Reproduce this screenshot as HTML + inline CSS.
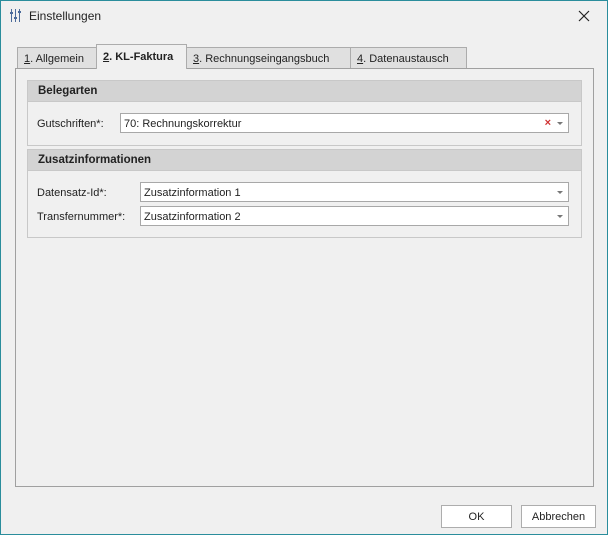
<!DOCTYPE html>
<html><head><meta charset="utf-8"><style>
*{box-sizing:border-box;margin:0;padding:0}
body{width:608px;height:535px;background:#f0f0f0;font-family:"Liberation Sans",sans-serif;font-size:11px;color:#222;position:relative;overflow:hidden}
.win{position:absolute;left:0;top:0;width:608px;height:535px;border:1px solid #2a8d9c}
.a{position:absolute}
.tab{position:absolute;top:47px;height:22px;border:1px solid #acacac;border-bottom:none;background:#e0e0e0;padding:5px 0 0 6px}
.tab.act{top:44px;height:25px;background:#f0f0f0;font-weight:bold;padding:6px 0 0 6px;z-index:2}
.panel{position:absolute;left:15px;top:68px;width:579px;height:419px;border:1px solid #a0a0a0}
.grp{position:absolute;left:27px;width:555px;border:1px solid #c8c8c8}
.gh{height:21px;background:#d3d3d3;font-weight:bold;font-size:11.5px;padding:4px 0 0 10px;border-bottom:1px solid #c8c8c8}
.cb{position:absolute;height:20px;background:#fff;border:1px solid #a8a8a8;padding:4px 0 0 3px}
.arr{position:absolute;right:5px;top:8px;width:0;height:0;border-left:3.5px solid transparent;border-right:3.5px solid transparent;border-top:3.5px solid #777}
.btn{position:absolute;top:505px;height:23px;border:1px solid #adadad;background:#fff;text-align:center;padding-top:5px}
u{text-decoration:underline}
</style></head><body><div class="win"></div>
<svg class="a" style="left:10px;top:9px" width="12" height="13" viewBox="0 0 12 13"><g stroke="#4a6a9a" stroke-width="1"><line x1="1.5" y1="0" x2="1.5" y2="13"/><line x1="5.5" y1="0" x2="5.5" y2="13"/><line x1="9.5" y1="0" x2="9.5" y2="13"/></g><g fill="#4a6a9a"><rect x="0" y="3" width="3" height="2"/><rect x="4" y="8" width="3" height="2"/><rect x="8" y="2" width="3" height="2"/></g></svg>
<div class="a" style="left:29px;top:9px;font-size:12px">Einstellungen</div>
<svg class="a" style="left:578px;top:10px" width="12" height="12"><path d="M1 1L11 11M11 1L1 11" stroke="#222" stroke-width="1.2"/></svg>
<div class="tab" style="left:17px;width:80px"><u>1</u>. Allgemein</div>
<div class="tab act" style="left:96px;width:91px"><u>2</u>. KL-Faktura</div>
<div class="tab" style="left:186px;width:165px"><u>3</u>. Rechnungseingangsbuch</div>
<div class="tab" style="left:350px;width:117px"><u>4</u>. Datenaustausch</div>
<div class="panel"></div>
<div class="grp" style="top:80px;height:66px"><div class="gh">Belegarten</div></div>
<div class="a" style="left:37px;top:118px">Gutschriften*:</div>
<div class="cb" style="left:120px;top:113px;width:449px">70: Rechnungskorrektur<span class="a" style="right:17px;top:3px;color:#d03030;font-size:11px;font-weight:bold">×</span><span class="arr"></span></div>
<div class="grp" style="top:149px;height:89px"><div class="gh">Zusatzinformationen</div></div>
<div class="a" style="left:37px;top:187px">Datensatz-Id*:</div>
<div class="cb" style="left:140px;top:182px;width:429px">Zusatzinformation 1<span class="arr"></span></div>
<div class="a" style="left:37px;top:211px">Transfernummer*:</div>
<div class="cb" style="left:140px;top:206px;width:429px">Zusatzinformation 2<span class="arr"></span></div>
<div class="btn" style="left:441px;width:71px">OK</div>
<div class="btn" style="left:521px;width:75px">Abbrechen</div>
</body></html>
